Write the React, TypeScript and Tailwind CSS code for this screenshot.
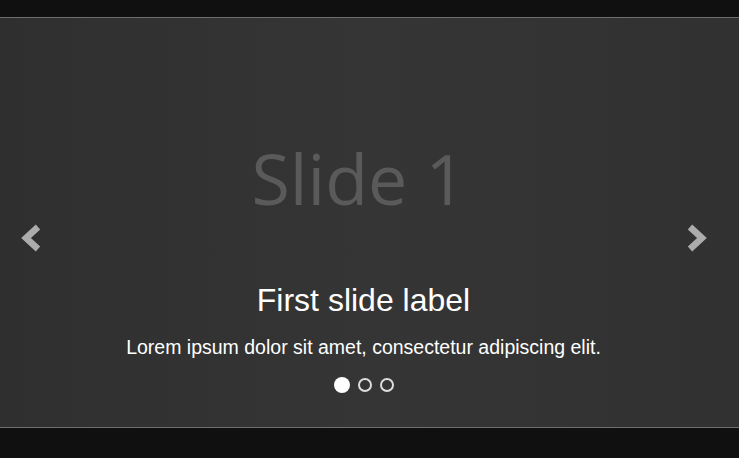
import { useState } from "react";

const slides = [
  { title: "Slide 1", label: "First slide label", text: "Lorem ipsum dolor sit amet, consectetur adipiscing elit." },
  { title: "Slide 2", label: "Second slide label", text: "Lorem ipsum dolor sit amet, consectetur adipiscing elit." },
  { title: "Slide 3", label: "Third slide label", text: "Lorem ipsum dolor sit amet, consectetur adipiscing elit." },
];

function Chevron({ dir }: { dir: "left" | "right" }) {
  return (
    <svg width="24" height="30" viewBox="0 0 24 30">
      <polyline
        points={dir === "left" ? "19,4 7,15 19,26" : "5,4 17,15 5,26"}
        fill="none"
        stroke="#acacac"
        strokeWidth="6.5"
        strokeLinejoin="miter"
      />
    </svg>
  );
}

export default function App() {
  const [active, setActive] = useState(0);
  const slide = slides[active];

  return (
    <div className="min-h-[458px] bg-[#101010] flex flex-col">
      <div className="h-[17px]" />
      <div className="relative h-[411px] border-y border-[#6e6e6e] bg-gradient-to-r from-[#2f2f2f] via-[#353535] to-[#313131] overflow-hidden">
        {/* Placeholder */}
        <div
          className="pt-[125px] text-center text-[#5a5a5a] text-[70px] leading-[70px] pr-[22px]"
          style={{ fontFamily: '"Open Sans", "Noto Sans", sans-serif' }}
        >
          {slide.title}
        </div>

        {/* Controls */}
        <button
          className="absolute left-[19px] top-[205px]"
          onClick={() => setActive((active + slides.length - 1) % slides.length)}
        >
          <Chevron dir="left" />
        </button>
        <button
          className="absolute right-[30px] top-[205px]"
          onClick={() => setActive((active + 1) % slides.length)}
        >
          <Chevron dir="right" />
        </button>

        {/* Caption */}
        <div
          className="absolute inset-x-0 top-[262px] text-center text-white pr-[12px]"
          style={{ fontFamily: '"Liberation Sans", Arial, sans-serif' }}
        >
          <h3 className="text-[32px] leading-[40px]">{slide.label}</h3>
          <p className="mt-[13px] text-[19.5px] leading-[28px]">{slide.text}</p>
          <div className="mt-[16px] flex items-center justify-center gap-[8px]">
            {slides.map((s, i) => (
              <button
                key={s.title}
                onClick={() => setActive(i)}
                className={
                  i === active
                    ? "w-[16px] h-[16px] rounded-full bg-white"
                    : "w-[14px] h-[14px] rounded-full border-2 border-[#dddddd]"
                }
              />
            ))}
          </div>
        </div>
      </div>
    </div>
  );
}
